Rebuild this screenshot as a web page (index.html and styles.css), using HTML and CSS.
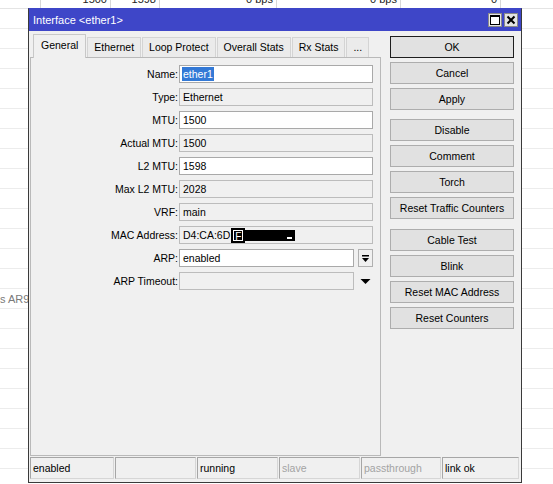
FILE: index.html
```html
<!DOCTYPE html>
<html>
<head>
<meta charset="utf-8">
<link rel="stylesheet" href="styles.css">
</head>
<body>
<div class="bg">
  <div class="bg-row first">
    <span class="c c1"></span><span class="c c2">1500</span><span class="c c3">1598</span><span class="c c4">0 bps</span><span class="c c5">0 bps</span><span class="c c6">0</span><span class="c c7"></span>
  </div>
  <div class="bg-row"></div><div class="bg-row"></div><div class="bg-row"></div><div class="bg-row"></div>
  <div class="bg-row"></div><div class="bg-row"></div><div class="bg-row"></div><div class="bg-row"></div>
  <div class="bg-row"></div><div class="bg-row"></div><div class="bg-row"></div><div class="bg-row"></div>
  <div class="bg-row"></div><div class="bg-row"></div>
  <div class="bg-row"><span class="dim">s AR9</span></div>
  <div class="bg-row"></div><div class="bg-row"></div><div class="bg-row"></div><div class="bg-row"></div>
  <div class="bg-row"></div><div class="bg-row"></div><div class="bg-row"></div><div class="bg-row"></div>
  <div class="bg-row"></div>
</div>

<div class="dialog">
  <div class="titlebar">
    <span class="title">Interface &lt;ether1&gt;</span>
    <div class="winbtns">
      <span class="winbtn"><svg width="14" height="14" viewBox="0 0 14 14"><rect x="0.5" y="0.5" width="13" height="13" fill="#e4e4e4" stroke="#8a8a8a"/><rect x="2.5" y="2.5" width="9" height="9" fill="#fff" stroke="#000"/><line x1="2" y1="3.5" x2="12" y2="3.5" stroke="#000" stroke-width="1"/></svg></span>
      <span class="winbtn"><svg width="14" height="14" viewBox="0 0 14 14"><rect x="0.5" y="0.5" width="13" height="13" fill="#e4e4e4" stroke="#8a8a8a"/><path d="M3.5 3.5 L10.5 10.5 M10.5 3.5 L3.5 10.5" stroke="#000" stroke-width="2"/></svg></span>
    </div>
  </div>
  <div class="main">
    <div class="leftcol">
      <div class="tabs">
        <div class="tab active">General</div>
        <div class="tab">Ethernet</div>
        <div class="tab">Loop Protect</div>
        <div class="tab">Overall Stats</div>
        <div class="tab">Rx Stats</div>
        <div class="tab">...</div>
      </div>
      <div class="panel">
        <div class="form">
          <div class="lbl">Name:</div><div class="field"><span class="sel">ether1</span></div>
          <div class="lbl">Type:</div><div class="field ro">Ethernet</div>
          <div class="lbl">MTU:</div><div class="field">1500</div>
          <div class="lbl">Actual MTU:</div><div class="field ro">1500</div>
          <div class="lbl">L2 MTU:</div><div class="field">1598</div>
          <div class="lbl">Max L2 MTU:</div><div class="field ro">2028</div>
          <div class="lbl">VRF:</div><div class="field ro">main</div>
          <div class="lbl">MAC Address:</div><div class="field ro">D4:CA:6D<span class="redact-f">F</span><span class="redact-bar"><span class="redact-dash"></span></span></div>
          <div class="lbl">ARP:</div>
          <div class="combo">
            <div class="field">enabled</div>
            <div class="dropbtn"><svg width="9" height="9" viewBox="0 0 9 9"><rect x="1" y="1" width="7" height="1.5" fill="#000"/><path d="M1 4 L8 4 L4.5 8 Z" fill="#000"/></svg></div>
          </div>
          <div class="lbl">ARP Timeout:</div>
          <div class="combo">
            <div class="field ro"></div>
            <div class="droparrow"><svg width="11" height="7" viewBox="0 0 11 7"><path d="M0.5 1 L10.5 1 L5.5 6 Z" fill="#000"/></svg></div>
          </div>
        </div>
      </div>
    </div>
    <div class="buttons">
      <div class="btn default">OK</div>
      <div class="btn">Cancel</div>
      <div class="btn">Apply</div>
      <div class="btn sep">Disable</div>
      <div class="btn">Comment</div>
      <div class="btn">Torch</div>
      <div class="btn">Reset Traffic Counters</div>
      <div class="btn sep2">Cable Test</div>
      <div class="btn">Blink</div>
      <div class="btn">Reset MAC Address</div>
      <div class="btn">Reset Counters</div>
    </div>
  </div>
  <div class="status">
    <div class="cell">enabled</div>
    <div class="cell"></div>
    <div class="cell">running</div>
    <div class="cell off">slave</div>
    <div class="cell off">passthrough</div>
    <div class="cell">link ok</div>
  </div>
</div>
</body>
</html>
```

FILE: styles.css
```css
* { box-sizing: border-box; }
html, body { margin: 0; padding: 0; }
body {
  width: 553px;
  height: 484px;
  overflow: hidden;
  background: #fff;
  font-family: "Liberation Sans", Arial, sans-serif;
  font-size: 10.5px;
  color: #000;
  position: relative;
}

/* background table */
.bg { margin-top: -11px; }
.bg-row {
  height: 20px;
  border-bottom: 1px solid #ececec;
  display: flex;
  align-items: center;
  white-space: nowrap;
}
.bg-row.first { border-bottom: 1px solid #e4e4e4; }
.c {
  height: 100%;
  border-right: 1px solid #d8d8d8;
  text-align: right;
  padding-right: 3px;
  line-height: 20px;
  font-size: 11px;
  color: #222;
  flex: none;
}
.c1 { width: 41px; }
.c2 { width: 70px; }
.c3 { width: 49px; }
.c4 { width: 117px; }
.c5 { width: 124px; }
.c6 { width: 100px; }
.c7 { flex: 1; border-right: none; }
.dim { color: #7a7a7a; font-size: 11px; }

/* dialog */
.dialog {
  position: absolute;
  left: 28px;
  top: 8px;
  width: 494px;
  height: 475px;
  border: 1px solid #3a3a3a;
  border-top-color: #3e46c8;
  background: #f0f0f0;
  display: flex;
  flex-direction: column;
}
.titlebar {
  height: 22px;
  flex: none;
  background: #3e46c8;
  display: flex;
  align-items: center;
  justify-content: space-between;
  padding: 0 3px 0 4px;
}
.title { color: #fff; font-size: 11px; }
.winbtns { display: flex; gap: 2px; }
.winbtn { display: block; width: 14px; height: 14px; }
.winbtn svg { display: block; }

.main {
  height: 425px;
  flex: none;
  display: flex;
}
.leftcol {
  width: 351px;
  margin-left: 1px;
  display: flex;
  flex-direction: column;
}
.tabs {
  height: 26px;
  flex: none;
  display: flex;
  align-items: flex-end;
  padding-left: 3px;
  gap: 1px;
  position: relative;
  z-index: 1;
}
.tab {
  height: 20px;
  padding: 0 6px;
  line-height: 18px;
  background: #ebebeb;
  border: 1px solid #d4d4d4;
  border-bottom: none;
  white-space: nowrap;
}
.tab.active {
  height: 24px;
  margin-bottom: -1px;
  background: #f0f0f0;
  border-color: #c8c8c8;
  line-height: 20px;
  padding: 0 7px;
}
.panel {
  flex: 1;
  border: 1px solid #b9b9b9;
  padding-top: 7px;
}
.form {
  display: grid;
  grid-template-columns: 147px 194px;
  column-gap: 1px;
  row-gap: 5px;
  grid-auto-rows: 18px;
}
.lbl {
  text-align: right;
  line-height: 18px;
  white-space: nowrap;
}
.field {
  height: 18px;
  border: 1px solid #a9a9a9;
  background: #fff;
  padding-left: 3px;
  line-height: 16px;
  white-space: nowrap;
  display: flex;
  align-items: center;
}
.field.ro {
  background: #f0f0f0;
  border-color: #bcbcbc;
}
.sel {
  background: #3379d6;
  color: #fff;
  line-height: 14px;
  padding: 0 1px;
  margin-left: -1px;
}
.redact-f {
  display: inline-block;
  background: #000;
  color: #fff;
  height: 15px;
  line-height: 13px;
  padding: 0 2px;
  border: 2px solid #000;
  outline: 1px solid #fff;
  outline-offset: -3px;
  margin-left: 1px;
  font-size: 10px;
}
.redact-bar {
  display: inline-block;
  position: relative;
  width: 50px;
  height: 11px;
  background: #000;
}
.redact-dash {
  position: absolute;
  right: 3px;
  bottom: 2px;
  width: 5px;
  height: 2px;
  background: #fff;
}
.combo {
  display: flex;
  gap: 4px;
}
.combo .field { width: 175px; flex: none; }
.dropbtn {
  width: 15px;
  height: 18px;
  border: 1px solid #b0b0b0;
  background: #f0f0f0;
  display: flex;
  align-items: center;
  justify-content: center;
}
.dropbtn svg, .droparrow svg { display: block; }
.droparrow {
  width: 15px;
  height: 18px;
  display: flex;
  align-items: center;
  justify-content: center;
}

/* buttons */
.buttons {
  margin-left: 9px;
  padding-top: 5px;
  width: 124px;
  display: flex;
  flex-direction: column;
}
.btn {
  height: 22px;
  margin-bottom: 4px;
  border: 1px solid #adadad;
  background: #e1e1e1;
  text-align: center;
  line-height: 20px;
  white-space: nowrap;
}
.btn.default { border-color: #1e1e1e; }
.btn.sep { margin-top: 5px; }
.btn.sep2 { margin-top: 6px; }

/* status bar */
.status {
  margin: 1px 2px 0 1px;
  height: 22px;
  flex: none;
  display: grid;
  grid-template-columns: 84px 81px 81px 81px 80px 1fr;
  gap: 1px;
}
.cell {
  border: 1px solid #a6a6a6;
  border-right-color: #d6d6d6;
  border-bottom-color: #d6d6d6;
  padding-left: 2px;
  line-height: 20px;
  white-space: nowrap;
  overflow: hidden;
}
.cell.off { color: #a3a3a3; }
```
